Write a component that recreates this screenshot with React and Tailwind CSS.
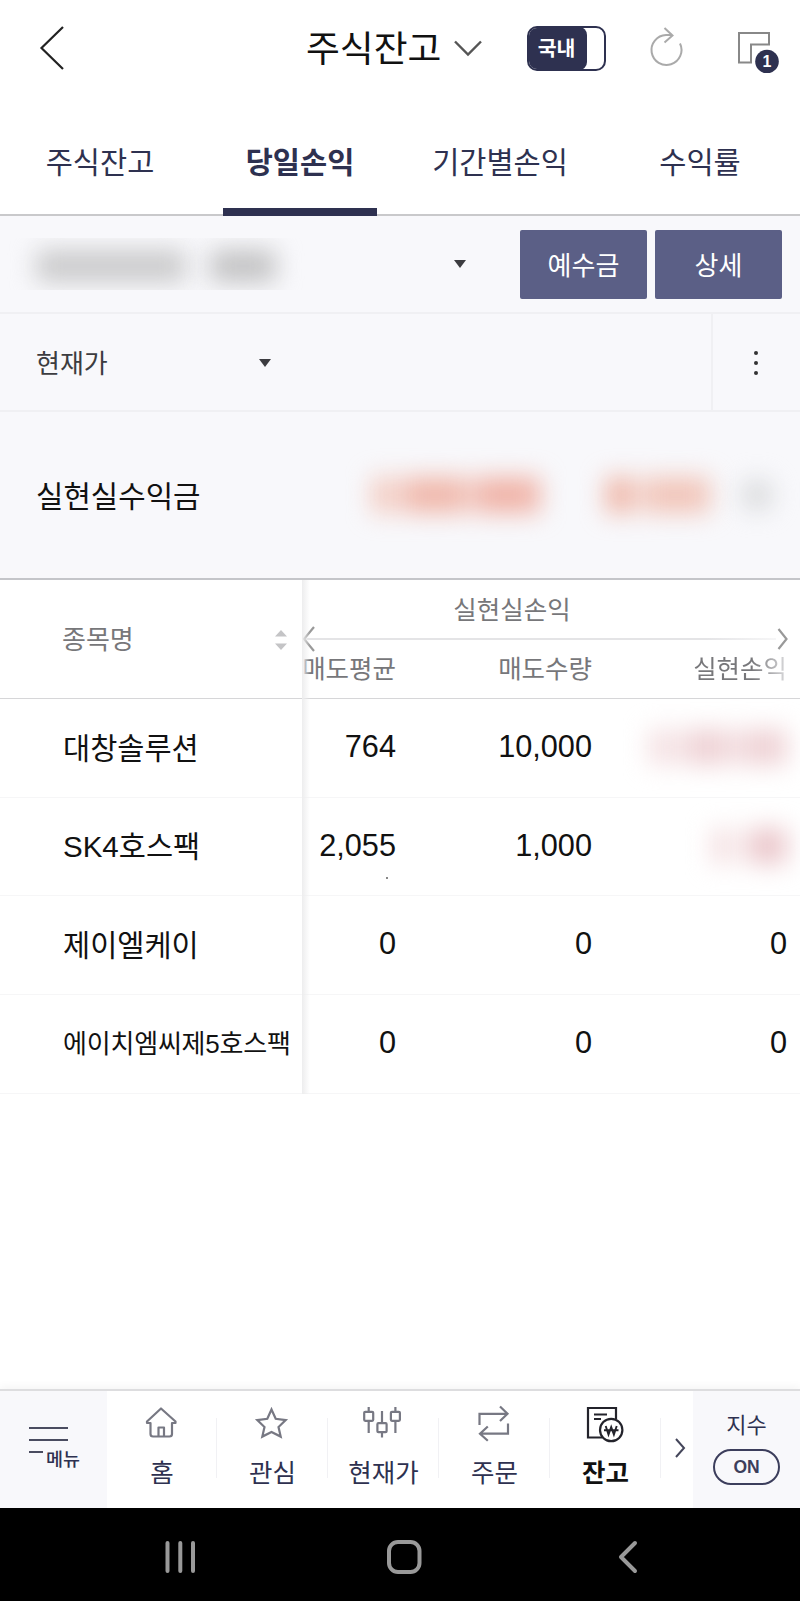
const TABS = [
  { label: "주식잔고" },
  { label: "당일손익", active: true },
  { label: "기간별손익" },
  { label: "수익률" },
];

const ROWS = [
  { name: "대창솔루션", avg: "764", qty: "10,000", hidden: "wide" },
  { name: "SK4호스팩", avg: "2,055", qty: "1,000", hidden: "narrow" },
  { name: "제이엘케이", avg: "0", qty: "0", pnl: "0" },
  { name: "에이치엠씨제5호스팩", avg: "0", qty: "0", pnl: "0", small: true },
];

function HomeIcon() {
  return (
    <svg width="48" height="48" viewBox="0 0 48 48" fill="none" stroke="#777883" strokeWidth="2.2" strokeLinejoin="round">
      <path d="M24 9.500 10 22.500V24h3.500v11q0 2.500 2.500 2.500h16.500q2.500 0 2.500-2.500V24h3.500v-1.500Z" />
      <path d="M21.500 37.500V28.500h5.500v9" />
    </svg>
  );
}

function StarIcon() {
  return (
    <svg width="48" height="48" viewBox="0 0 48 48" fill="none" stroke="#777883" strokeWidth="2.2">
      <path d="m24.500 10.500 4.200 9.300 10 1.300-7.200 6.900 2.200 9.600L24.500 33l-9.200 4.600 2.200-9.600-7.200-6.900 10-1.300Z" />
    </svg>
  );
}

function CandleIcon() {
  return (
    <svg width="48" height="48" viewBox="0 0 48 48" fill="none" stroke="#777883" strokeWidth="2.2">
      <rect x="6.200" y="12.800" width="9" height="9" rx="1" />
      <path d="M10.700 8v4.800M10.700 21.800V34M24 12v12.200M24 33.200v5.300M37.400 8v4.800M37.400 21.800V34" />
      <rect x="19.400" y="24.200" width="9.200" height="9" rx="1" />
      <rect x="32.900" y="12.800" width="9" height="9" rx="1" />
    </svg>
  );
}

function OrderIcon() {
  return (
    <svg width="48" height="48" viewBox="0 0 48 48" fill="none" stroke="#777883" strokeWidth="2.2">
      <path d="M10.500 26V14.800h28M31 7.500l7.500 7.300-7.500 7.200" />
      <path d="M39 24.500v10.200H11M18.800 27.500 11 34.700l7.800 7" />
    </svg>
  );
}

function BalanceIcon() {
  return (
    <svg width="48" height="48" viewBox="0 0 48 48" fill="none" stroke="#23232b" strokeWidth="2.2">
      <path d="M36 20V9H8V38.500h14" />
      <path d="M14 15.500h13M14 20h7" />
      <circle cx="31.200" cy="31" r="11.200" fill="#fff" />
      <path d="m25.700 27 2.800 8.500 2.700-7.500 2.700 7.500 2.800-8.500M24 31.300h14.500" strokeWidth="1.900" />
    </svg>
  );
}

const NAV = [
  { label: "홈", icon: HomeIcon, width: "w-[110px]" },
  { label: "관심", icon: StarIcon, width: "w-[111px]" },
  { label: "현재가", icon: CandleIcon, width: "w-[111px]" },
  { label: "주문", icon: OrderIcon, width: "w-[111px]" },
  { label: "잔고", icon: BalanceIcon, width: "w-[111px]", active: true },
];

function Header() {
  return (
    <header className="flex h-24 items-center">
      <svg className="ml-9 shrink-0" width="32" height="52" viewBox="0 0 32 52" fill="none" stroke="#222" strokeWidth="2.200">
        <path d="M27 5 5.500 26 27 47" />
      </svg>
      <h1 className="ml-[238px] w-[136px] whitespace-nowrap pt-[5px] text-[36.800px] leading-none text-[#111]">주식잔고</h1>
      <svg className="ml-2.5 shrink-0" width="32" height="20" viewBox="0 0 32 20" fill="none" stroke="#555" strokeWidth="2.400">
        <path d="m3 3.500 13 13 13-13" />
      </svg>
      <div className="ml-[43px] flex h-[45px] w-[79px] shrink-0 overflow-hidden rounded-[10px] border-2 border-[#2e3150] bg-white">
        <div className="-my-px -ml-px flex w-[59px] items-center justify-center rounded-r-[8px] bg-[#2e3150] pr-0.5 pt-0.5 text-[20.500px] font-bold leading-none text-white">
          국내
        </div>
      </div>
      <svg className="ml-[40px] shrink-0" width="40" height="48" viewBox="0 0 40 48" fill="none" stroke="#aaa" strokeWidth="2">
        <path d="M34 19.500A15 15 0 1 1 20 11h6M18.500 4l8 7.500-8 7" />
      </svg>
      <svg className="ml-[48px] shrink-0" width="50" height="50" viewBox="0 0 50 50" fill="none">
        <path d="M5 10h30v11.500H17V39.500H5Z" stroke="#888" strokeWidth="2" />
        <circle cx="33" cy="38.500" r="11.800" fill="#2e3150" />
        <text x="33" y="44.200" fill="#fff" fontSize="16" fontWeight="700" textAnchor="middle">1</text>
      </svg>
    </header>
  );
}

function Tabs() {
  return (
    <nav className="flex h-[120px] border-b-2 border-[#c9c9cb]">
      {TABS.map((tab) => (
        <div key={tab.label} className="flex w-[200px] flex-col items-center">
          <span className={`flex h-[112px] shrink-0 items-center pt-[21px] text-[29.500px] leading-none text-[#2e3150] ${tab.active ? "font-bold" : ""}`}>
            {tab.label}
          </span>
          {tab.active && <span className="h-2 w-[154px] shrink-0 bg-[#2e3150]" />}
        </div>
      ))}
    </nav>
  );
}

function Caret() {
  return (
    <svg width="12" height="8" viewBox="0 0 12 8" fill="#3c3c40">
      <path d="M0 0h12L6 8Z" />
    </svg>
  );
}

function AccountBar() {
  return (
    <div className="flex h-[98px] items-center border-b-2 border-[#f0f0f3] bg-[#f8f8fb]">
      <div className="flex h-[52px] w-[454px] items-center gap-6 overflow-hidden pl-[36px] pt-1">
        <div className="h-8 w-[150px] rounded-md bg-[#cacacb] blur-[12px]" />
        <div className="h-8 w-[66px] rounded-md bg-[#c2c2c3] blur-[12px]" />
      </div>
      <Caret />
      <button className="ml-[54px] h-[69px] w-[127px] rounded-xs bg-[#5b5f86] pt-1 text-[26px] leading-none text-white">예수금</button>
      <button className="ml-2 h-[69px] w-[127px] rounded-xs bg-[#5b5f86] pt-1 text-[26px] leading-none text-white">상세</button>
    </div>
  );
}

function FilterBar() {
  return (
    <div className="flex h-[98px] items-center border-b-2 border-[#f0f0f3] bg-[#f8f8fb] pt-0.5">
      <span className="w-[222px] pl-9 pt-0.5 text-[26px] leading-none text-[#3c3c40]">현재가</span>
      <div className="ml-[37px] flex-1">
        <Caret />
      </div>
      <div className="-mt-0.5 flex h-[96px] w-[89px] flex-col items-center justify-center gap-1.5 border-l-2 border-[#f0f0f3] pr-px pt-0.5">
        <span className="size-1 rounded-full bg-[#333]" />
        <span className="size-1 rounded-full bg-[#333]" />
        <span className="size-1 rounded-full bg-[#333]" />
      </div>
    </div>
  );
}

function Summary() {
  return (
    <div className="flex h-[168px] items-center border-b-2 border-[#c4c5c9] bg-[#f8f8fb]">
      <span className="w-[372px] pl-9 pt-[3px] text-[29.800px] leading-none text-[#111]">실현실수익금</span>
      <div className="flex h-9 w-[168px] gap-1.5 blur-[12px]">
        <span className="w-6 bg-[#f3cabf]" />
        <span className="flex-1 bg-[#f0b8ab]" />
        <span className="w-[66px] bg-[#f0b3a7]" />
      </div>
      <div className="ml-[66px] flex h-9 w-[104px] gap-2 blur-[12px]">
        <span className="w-7 bg-[#efb5a6]" />
        <span className="flex-1 bg-[#f1c5b9]" />
      </div>
      <div className="ml-[31px] size-8 rounded-full bg-[#d9dadc] blur-[12px]" />
    </div>
  );
}

function SortIcon() {
  return (
    <svg className="mt-0.5" width="12" height="20" viewBox="0 0 12 20" fill="#c4c4c6">
      <path d="M0 6.500h12L6 0ZM0 13.500h12L6 20Z" />
    </svg>
  );
}

function Table() {
  return (
    <div className="flex h-[514px]">
      <div className="w-[302px] shrink-0">
        <div className="flex h-[119px] items-center justify-between border-b border-[#d6d6d8] pl-[62px] pr-[15px] text-[26px] leading-none text-[#77777a]">
          <span className="pt-0.5">종목명</span>
          <SortIcon />
        </div>
        {ROWS.map((row) => (
          <div
            key={row.name}
            className={`flex h-[98.700px] items-center whitespace-nowrap border-b border-[#f6f6f7] pl-[63px] leading-none text-[#111] ${row.small ? "pt-px text-[26px] tracking-[-0.200px]" : "pt-px text-[29.500px]"}`}
          >
            {row.name}
          </div>
        ))}
      </div>
      <div className="relative flex-1 overflow-hidden">
        <div className="absolute inset-y-0 left-0 w-2 bg-linear-to-r from-[#ededee] to-transparent" />
        <div className="flex h-[119px] flex-col border-b border-[#d6d6d8] text-[25.500px] leading-none text-[#77777a]">
          <div className="flex h-[50px] items-center justify-center pr-[78px] pt-3">실현실손익</div>
          <div className="flex h-[18px] items-center">
            <svg className="shrink-0" width="14" height="28" viewBox="0 0 14 28" fill="none" stroke="#999" strokeWidth="2.200">
              <path d="M12 2 2 14l10 12" />
            </svg>
            <div className="-ml-2.5 h-0.5 flex-1 bg-linear-to-r from-[#e4e4e6] from-85% to-[#f6f6f7]" />
            <svg className="mr-3 shrink-0" width="12" height="24" viewBox="0 0 12 24" fill="none" stroke="#999" strokeWidth="2.200">
              <path d="m2.500 2 8 10-8 10" />
            </svg>
          </div>
          <div className="flex h-[50px] items-center whitespace-nowrap pb-[7px] text-right">
            <span className="flex w-[94px] justify-end">매도평균</span>
            <span className="w-[196px]">매도수량</span>
            <span className="w-[195px] bg-linear-to-r from-[#77777a] from-82% to-[#dcdcde] bg-clip-text text-transparent">실현손익</span>
          </div>
        </div>
        {ROWS.map((row) => (
          <div
            key={row.name}
            className="flex h-[98.700px] items-center border-b border-[#f6f6f7] pb-px text-right text-[30.700px] leading-none text-[#111]"
          >
            <span className="w-[94px]">{row.avg}</span>
            <span className="w-[196px]">{row.qty}</span>
            <span className="flex w-[195px] justify-end">
              {row.hidden === "wide" && (
                <span className="flex gap-1.5 blur-[12px]">
                  <span className="h-9 w-7 bg-[#f4e0e2]" />
                  <span className="h-9 w-[50px] bg-[#efd3d6]" />
                  <span className="h-9 w-12 bg-[#efd3d6]" />
                </span>
              )}
              {row.hidden === "narrow" && (
                <span className="flex gap-3 blur-[12px]">
                  <span className="h-9 w-6 bg-[#f4e0e2]" />
                  <span className="h-9 w-10 bg-[#ebc8cc]" />
                </span>
              )}
              {row.pnl}
            </span>
          </div>
        ))}
        {/* small mark under the second price */}
        <span className="absolute left-[84px] top-[297px] size-0.5 bg-[#888]" />
      </div>
    </div>
  );
}

function BottomNav() {
  return (
    <nav className="flex h-[119px] border-t-2 border-[#dddddf] shadow-[0_-3px_8px_rgba(0,0,0,0.04)]">
      <div className="flex w-[107px] flex-col bg-[#f8f8fb] pl-[29px] pt-[36px]">
        <span className="h-0.5 w-[39px] shrink-0 bg-[#4a4c60]" />
        <span className="mt-2.5 h-0.5 w-[39px] shrink-0 bg-[#4a4c60]" />
        <span className="mt-2.5 flex">
          <span className="h-0.5 w-[14px] shrink-0 bg-[#4a4c60]" />
          <span className="ml-[3px] whitespace-nowrap text-[18.500px] font-medium leading-none text-[#2e3150]">메뉴</span>
        </span>
      </div>
      {NAV.map(({ label, icon: Icon, width, active }) => (
        <div key={label} className={`${width} relative flex flex-col items-center pt-2`}>
          <span className="mr-[3px]">
            <Icon />
          </span>
          <span className={`mt-3.5 text-[25.500px] leading-none ${active ? "font-bold text-[#111]" : "text-[#2e3150]"}`}>{label}</span>
          <span className="absolute right-0 top-[27px] h-[60px] w-px bg-[#f1f1f4]" />
        </div>
      ))}
      <div className="flex w-[32px] justify-center pl-[5px] pt-[46px]">
        <svg width="12" height="22" viewBox="0 0 12 22" fill="none" stroke="#44465a" strokeWidth="2">
          <path d="m2 2 8 9-8 9" />
        </svg>
      </div>
      <div className="flex flex-1 flex-col items-center bg-[#f8f8fb] pt-6">
        <span className="text-[22px] leading-none text-[#2e3150]">지수</span>
        <span className="mt-3 flex h-9 w-[67px] items-center justify-center rounded-full border-2 border-[#3c3e5c] pt-0.5 text-[17.500px] font-bold leading-none text-[#3c3e5c]">
          ON
        </span>
      </div>
    </nav>
  );
}

function SystemBar() {
  return (
    <div className="h-[93px] bg-black">
      <svg width="800" height="93" viewBox="0 1 800 93" fill="none" stroke="#999" strokeWidth="4" strokeLinecap="round">
        <path d="M167.500 36v28M180.300 36v28M193 36v28" />
        <rect x="389" y="35" width="30.500" height="30" rx="9" />
        <path d="M635 36 621 50l14 14" strokeLinejoin="round" />
      </svg>
    </div>
  );
}

export default function App() {
  return (
    <div className="flex h-[1601px] w-[800px] flex-col overflow-hidden bg-white font-['Liberation_Sans','Noto_Sans_CJK_KR',sans-serif]">
      <Header />
      <Tabs />
      <AccountBar />
      <FilterBar />
      <Summary />
      <Table />
      <div className="flex-1" />
      <BottomNav />
      <SystemBar />
    </div>
  );
}
